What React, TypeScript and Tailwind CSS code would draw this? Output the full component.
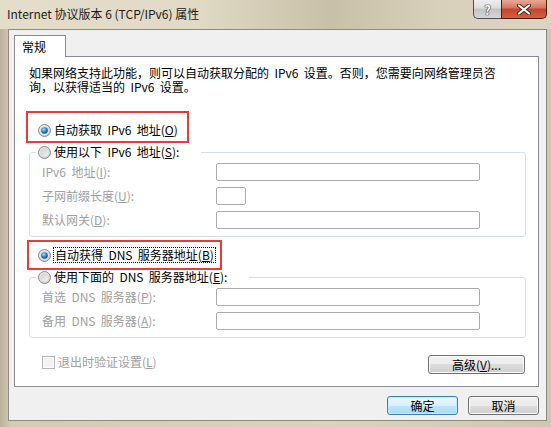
import type { ReactNode } from "react";

function Radio({ checked }: { checked?: boolean }) {
  return (
    <svg width="13" height="13" viewBox="0 0 13 13" className="shrink-0">
      <defs>
        <linearGradient id="radioRing" x1="0" y1="0" x2="1" y2="1">
          <stop offset="0" stopColor="#f6f6f6" />
          <stop offset="1" stopColor="#c4c4c4" />
        </linearGradient>
        <linearGradient id="radioInner" x1="0" y1="0" x2="1" y2="1">
          <stop offset="0" stopColor="#cfcfcf" />
          <stop offset="1" stopColor="#f4f4f4" />
        </linearGradient>
        <radialGradient id="radioDot" cx="0.4" cy="0.35" r="0.7">
          <stop offset="0" stopColor="#a6e6fb" />
          <stop offset="0.5" stopColor="#2a88d2" />
          <stop offset="1" stopColor="#0c3f79" />
        </radialGradient>
      </defs>
      <circle cx="6.5" cy="6.5" r="6" fill="url(#radioRing)" stroke="#8b8b8b" />
      <circle cx="6.5" cy="6.5" r="4.2" fill="url(#radioInner)" />
      {checked && <circle cx="6.5" cy="6.5" r="3.3" fill="url(#radioDot)" />}
    </svg>
  );
}

function K({ k }: { k: string }) {
  return <span className="underline underline-offset-1">{k}</span>;
}

function Field({ small }: { small?: boolean }) {
  return (
    <div
      className={`h-[18px] rounded-[2px] border border-[#acacac] bg-white ${
        small ? "w-[30px]" : "w-[264px]"
      }`}
    />
  );
}

function Row({ label, small }: { label: ReactNode; small?: boolean }) {
  return (
    <div className="flex h-[18px] items-center">
      <span className="ml-[6px] w-[174px] whitespace-pre text-[#a0a0a0]">{label}</span>
      <Field small={small} />
    </div>
  );
}

function WinButton({ children, focused, className = "" }: { children: ReactNode; focused?: boolean; className?: string }) {
  return (
    <button
      className={`flex h-[19px] items-center justify-center rounded-[3px] border text-[12px] leading-none ${
        focused
          ? "border-[#3c7fb1] bg-[linear-gradient(#eaf6fd,#d9f0fc_50%,#bee6fd_50%,#a7d9f5)] shadow-[inset_0_0_0_1px_#c4ecfd]"
          : "border-[#707070] bg-[linear-gradient(#f2f2f2,#ebebeb_50%,#dddddd_50%,#cfcfcf)] shadow-[inset_0_0_0_1px_#fbfbfb]"
      } ${className}`}
    >
      {children}
    </button>
  );
}

export default function App() {
  return (
    <div className="flex h-[427px] w-[551px] flex-col overflow-hidden bg-[linear-gradient(90deg,#b9b098,#d3cbb4_2%,#d9d2bd_60%,#cfc7b1)] font-['Noto_Sans_CJK_SC',sans-serif] text-[12px] text-black">
      {/* title bar */}
      <div className="flex h-[29px] shrink-0 items-start justify-between bg-[linear-gradient(90deg,#e4ddca_0%,#e1dac6_35%,#c9c0a8_60%,#d8d0bb_80%,#dcd5c2_100%)] pr-[4px]">
        <span className="whitespace-pre pl-[7px] pt-[6px] text-[12px] leading-[16px] text-[#1a1a1a]">
          Internet 协议版本 6 (TCP/IPv6) 属性
        </span>
        <div className="flex">
          <div className="flex h-[19px] w-[28px] items-center justify-center rounded-bl-[5px] border border-t-0 border-r-0 border-[#4f4f4f] bg-[linear-gradient(#eeeeee,#dcdcdc_45%,#c3c3c3_50%,#d6d6d6)] text-[13px] font-bold leading-none text-white [text-shadow:0_0_1px_#333,0_0_1px_#333,0_0_1px_#333]">
            ?
          </div>
          <div className="flex h-[19px] w-[46px] items-center justify-center rounded-br-[5px] border border-t-0 border-[#4f1b10] bg-[linear-gradient(#e9a896,#d8735c_45%,#c7432a_50%,#d4603f)]">
            <svg width="14" height="11" viewBox="0 0 14 11">
              <path d="M2 1.5 L12 9.5 M12 1.5 L2 9.5" stroke="#3a2a26" strokeWidth="4" strokeLinecap="round" />
              <path d="M2 1.5 L12 9.5 M12 1.5 L2 9.5" stroke="#ffffff" strokeWidth="2.2" strokeLinecap="round" />
            </svg>
          </div>
        </div>
      </div>

      {/* client area */}
      <div className="ml-[8px] flex h-[392px] w-[539px] flex-col border border-[#8d8a7e] bg-[#f0f0f0] pl-[5px] pt-[5px]">
        <div className="relative z-10 -mb-px flex h-[22px] w-[52px] items-center border border-b-0 border-[#898c95] bg-white pl-[7px] leading-none">
          常规
        </div>

        <div className="flex h-[331px] w-[525px] flex-col border border-[#898c95] bg-white">
          <div className="ml-[14px] mt-[9px] flex flex-col whitespace-pre text-[12px] leading-[14px]">
            <span>如果网络支持此功能，则可以自动获取分配的  IPv6  设置。否则，您需要向网络管理员咨</span>
            <span>询，以获得适当的  IPv6  设置。</span>
          </div>

          <div className="ml-[11px] mt-[17px] h-[32px] w-[163px] border-2 border-[#ea3a3a] pl-[10px] pt-[10px]">
            <div className="flex h-[14px] items-center gap-[3px] whitespace-pre leading-none">
              <Radio checked />
              <span>
                自动获取  IPv6  地址(<K k="O" />)
              </span>
            </div>
          </div>

          <fieldset className="ml-[14px] mt-[2px] w-[497px] rounded-[3px] border border-[#d5dfe5] pb-[7px] pl-[6px] pt-[4px]">
            <legend className="pl-[2px] pr-[22px]">
              <div className="flex h-[14px] items-center gap-[3px] whitespace-pre leading-none">
                <Radio />
                <span>
                  使用以下  IPv6  地址(<K k="S" />):
                </span>
              </div>
            </legend>
            <div className="flex flex-col gap-[6px]">
              <Row label={<>IPv6  地址(<K k="I" />):</>} />
              <Row label={<>子网前缀长度(<K k="U" />):</>} small />
              <Row label={<>默认网关(<K k="D" />):</>} />
            </div>
          </fieldset>

          <div className="ml-[12px] mt-[3px] h-[30px] w-[195px] border-2 border-[#ea3a3a] pl-[9px] pt-[5px]">
            <div className="flex h-[16px] items-center gap-[2px] whitespace-pre leading-none">
              <Radio checked />
              <span className="flex h-[16px] items-center border border-dotted border-black px-[1px]">
                自动获得  DNS  服务器地址(<K k="B" />)
              </span>
            </div>
          </div>

          <fieldset className="ml-[14px] mt-0 w-[497px] rounded-[3px] border border-[#d5dfe5] pb-[7px] pl-[6px] pt-[4px]">
            <legend className="pl-[2px] pr-[22px]">
              <div className="flex h-[14px] items-center gap-[3px] whitespace-pre leading-none">
                <Radio />
                <span>
                  使用下面的  DNS  服务器地址(<K k="E" />):
                </span>
              </div>
            </legend>
            <div className="flex flex-col gap-[6px]">
              <Row label={<>首选  DNS  服务器(<K k="P" />):</>} />
              <Row label={<>备用  DNS  服务器(<K k="A" />):</>} />
            </div>
          </fieldset>

          <div className="mt-[17px] flex items-start justify-between pl-[27px] pr-[13px]">
            <div className="flex h-[14px] items-center gap-[3px] leading-none text-[#a0a0a0]">
              <div className="h-[13px] w-[13px] border border-[#b5b5b5] bg-[#f4f4f4] shadow-[inset_0_0_0_1px_#fbfbfb]" />
              <span>
                退出时验证设置(<K k="L" />)
              </span>
            </div>
            <WinButton className="w-[97px]">
              高级(<K k="V" />)...
            </WinButton>
          </div>
        </div>

        <div className="mt-[9px] flex justify-end gap-[10px] pr-[7px]">
          <WinButton focused className="w-[71px]">
            确定
          </WinButton>
          <WinButton className="w-[71px]">取消</WinButton>
        </div>
      </div>
    </div>
  );
}
